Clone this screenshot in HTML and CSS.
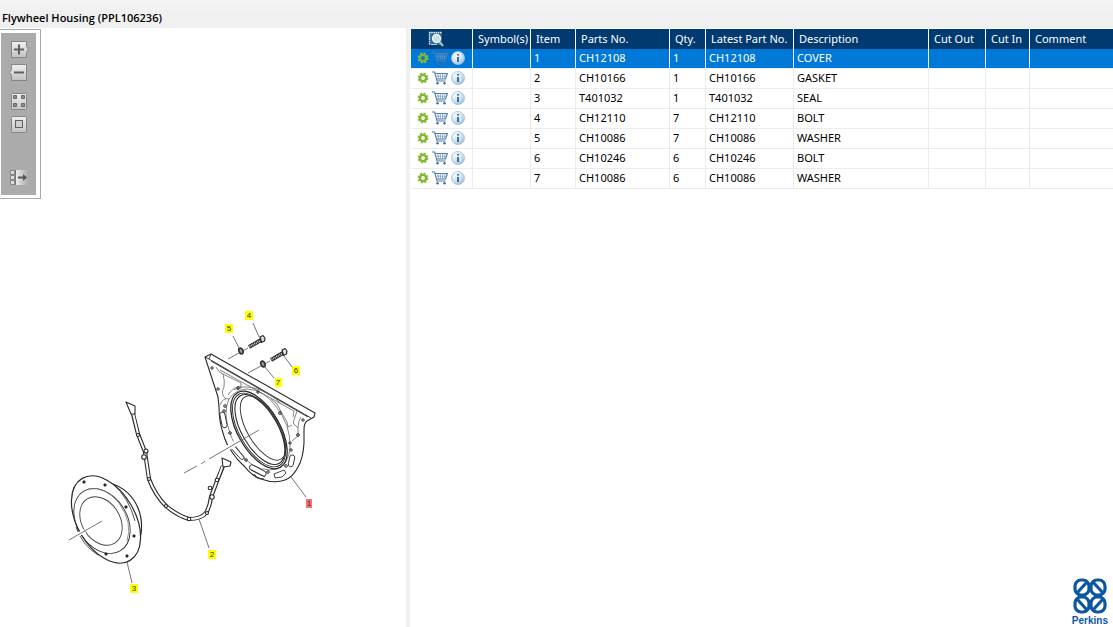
FILE: index.html
```html
<!DOCTYPE html>
<html lang="en">
<head>
<meta charset="utf-8">
<title>Flywheel Housing (PPL106236)</title>
<link rel="stylesheet" href="styles.css">
</head>
<body>
<svg class="defs" aria-hidden="true">
  <defs>
    <linearGradient id="key" x1="0" y1="0" x2="0" y2="1"><stop offset="0" stop-color="#f0f0f0"/><stop offset="1" stop-color="#c2c2c2"/></linearGradient>
    <linearGradient id="fade" x1="0" y1="0" x2="1" y2="0"><stop offset="0" stop-color="#ececec"/><stop offset="1" stop-color="#ababab"/></linearGradient>
    <radialGradient id="ball" cx=".35" cy=".3" r=".8"><stop offset="0" stop-color="#f4f9fc"/><stop offset=".6" stop-color="#cfe0ec"/><stop offset="1" stop-color="#8fb4d2"/></radialGradient>
    <symbol id="gear" viewBox="0 0 12 12">
      <circle cx="6" cy="6" r="4.500" fill="none" stroke="#8fc33f" stroke-width="2" stroke-dasharray="2 1.534"/>
      <circle cx="6" cy="6" r="3.100" fill="none" stroke="#7fb532" stroke-width="2.400"/>
    </symbol>
    <symbol id="cart" viewBox="0 0 16 14">
      <path d="M0 1h2.600l2.400 9h8.500M3 2.500h12.500l-2 5.500H5" fill="none" stroke="#4d7fab" stroke-width="1.100"/>
      <path d="M3.500 5.200h11M5.700 2.500l1 5.500M8.200 2.500l.3 5.500M10.700 2.500L10.400 8M13.200 2.500L12.200 8" stroke="#7797b5" stroke-width=".7"/>
      <circle cx="5.500" cy="12.300" r="1.200" fill="#3d6f9e"/><circle cx="12.500" cy="12.300" r="1.200" fill="#3d6f9e"/>
    </symbol>
    <symbol id="info" viewBox="0 0 14 14">
      <circle cx="7" cy="7" r="6.600" fill="url(#ball)" stroke="#a3c1d8" stroke-width=".7"/>
      <path d="M6 3h2v1.600H6zM6 6h2v5H6z" fill="#38709e"/>
    </symbol>
  </defs>
</svg>
<header class="titlebar"><h1 class="title">Flywheel Housing (PPL106236)</h1></header>
<main class="panes">
  <section class="drawing" aria-label="Drawing">
    <svg class="diagram" viewBox="0 28 406 599" preserveAspectRatio="xMinYMin meet" fill="none" stroke="#2a2a2a" stroke-width=".9" stroke-linejoin="round">
      <g id="housing">
        <path d="M205 357l6-3 104 59-1 4-7 4q-3 2-3 9v13q-1 16-6 24-5 10-13 13-10 4-24-1-8-2-16-12-8-7-13-15-6-8-9-19-4-12-4-26l-1-10z" fill="#fff" stroke-width="1.100"/>
        <path d="M205 357l4 2 102 59M209 359l2-5M211 361l97 56"/>
        <path d="M216 367q2 5 7 7 2 7 1 13-4 7 2 12M220 370l74 41-1 6M223 374l18 9v5l-4 2M228 395q5-8 13-9M297 411l-4 12 5 5v8l-6 5M301 417q-3 4-3 11M271 399l6 5q4 8 10 18l1 5 4-2M234 390q8-5 20-2 16 4 27 16M220 405q3-8 9-6" stroke="#666" stroke-width=".8"/>
        <path d="M229 430q-6-18 0-31 7-10 19-10 15 1 27 16 16 20 15 42-1 17-13 22-16 4-31-9-12-13-17-30" stroke="#555" stroke-width=".7"/>
        <g transform="rotate(-30 259 430)"><ellipse cx="259" cy="430" rx="21" ry="43" stroke-width="1.300"/><ellipse cx="259" cy="430" rx="19.500" ry="41"/><ellipse cx="260" cy="430" rx="18" ry="39" stroke-width="1.100"/></g>
        <ellipse cx="263" cy="428" rx="16" ry="36" transform="rotate(-30 263 428)" stroke="#333"/>
        <g stroke="#333" stroke-width=".9">
          <rect x="221" y="412" width="5" height="16" rx="2.500" transform="rotate(-12 223 420)"/>
          <rect x="229" y="451" width="17" height="4" rx="2" transform="rotate(48 238 453)"/>
          <rect x="249" y="468" width="18" height="5" rx="2.500" transform="rotate(28 258 470)"/>
          <path d="M274 474l10-4 2 3-4 4-7 1zM254 474l4 4 6 1M251 470l14 7"/>
          <rect x="289" y="455" width="5" height="12" rx="2.500" transform="rotate(12 292 461)"/>
        </g>
        <g stroke-width="1"><circle cx="212" cy="368" r="1.200"/><circle cx="218" cy="389" r="1.200"/><circle cx="225" cy="406" r="1.300"/><circle cx="224" cy="411" r="1.300"/><circle cx="230" cy="433" r="1.300"/><circle cx="246" cy="460" r="1.300"/><circle cx="268" cy="472" r="1.300"/><circle cx="286" cy="466" r="1.300"/><circle cx="290" cy="443" r="1.200"/><circle cx="291" cy="450" r="1.200"/><circle cx="298" cy="435" r="1.400"/><circle cx="303" cy="420" r="1.200"/><circle cx="280" cy="413" r="1.400"/><circle cx="258" cy="392" r="1.200"/><circle cx="238" cy="388" r="1.200"/></g>
      </g>
      <path d="M226 449l12-7" stroke="#fff" stroke-width="5"/>
      <path d="M184 473l13-7M201 464l4-3M209 459l50-29" stroke="#666"/>
      <g id="gasket">
        <path d="M133 414l5 20 7 18 4 27q6 16 17 27 12 10 23 13 12 0 17-6 4-7 5-16l6-16 6-15" stroke-width="4.200"/>
        <path d="M133 413l5 21 7 18 4 27q6 16 17 27 12 10 23 13 12 0 17-6 4-7 5-16l6-16 6-16" stroke="#fff" stroke-width="2"/>
        <path d="M126 402l9 4v8h-4zM222 458l9 4-1 4-7 1z" fill="#fff" stroke-width="1.100"/>
        <g fill="#fff" stroke-width="1.100"><circle cx="138" cy="435" r="1.500"/><circle cx="146" cy="451" r="2"/><circle cx="144" cy="457" r="2.300"/><circle cx="149" cy="479" r="1.500"/><circle cx="166" cy="506" r="1.500"/><circle cx="189" cy="519" r="1.800"/><circle cx="207" cy="513" r="1.500"/><circle cx="210" cy="488" r="1.800"/><circle cx="212" cy="497" r="2.200"/><circle cx="217" cy="480" r="1.800"/></g>
      </g>
      <g id="cover">
        <path d="M110 483q20 6 28 25 5 12 3 26l-2 5" stroke-width="1.200"/>
        <ellipse cx="106" cy="519.500" rx="29" ry="47.500" transform="rotate(-30 106 519.500)" fill="#fff" stroke-width="1.200"/>
        <path d="M76 527q6 18 22 28M113 484q16 14 22 37" stroke-width=".8"/>
        <ellipse cx="102" cy="521" rx="25" ry="35" transform="rotate(-32 102 521)" stroke="#333"/>
        <path d="M88 489q17-3 31 14 14 20 8 38" stroke="#777" stroke-width=".8"/>
        <ellipse cx="101" cy="521" rx="19" ry="26" transform="rotate(-32 101 521)" stroke="#444"/>
        <g fill="#222"><circle cx="84" cy="482" r="1.200"/><circle cx="105" cy="485" r="1.200"/><circle cx="126" cy="507" r="1.200"/><circle cx="134" cy="536" r="1.200"/><circle cx="127" cy="556" r="1.200"/><circle cx="106" cy="554" r="1.200"/></g>
        <path d="M75 536l10-5" stroke="#fff" stroke-width="4"/><path d="M69 540l33-19" stroke="#666"/>
      </g>
      <g id="bolts">
        <path d="M228 359l20-11M248 373l22-12" stroke="#666"/>
        <g id="bolt"><path d="M249 347l12-7" stroke-width="4"/><path d="M249.500 346.500l11-6" stroke="#ccc" stroke-width="2" stroke-dasharray="1 .8"/><path d="M260 337l3-1.500 2 2.500-.5 3-3 1.500z" fill="#ddd" stroke-width="1.200"/></g>
        <use href="#bolt" x="22" y="13"/>
        <ellipse cx="241" cy="351" rx="2" ry="3" transform="rotate(-25 241 351)" fill="#999" stroke-width="1.500"/>
        <ellipse cx="263" cy="364" rx="2" ry="3" transform="rotate(-25 263 364)" fill="#999" stroke-width="1.500"/>
      </g>
      <path d="M253 323l6 14M233 336l6 12M284 356l8 11M265 367l9 11M291 477l15 20M199 519l10 29M127 562l5 21" stroke="#666"/>
      <g class="tags">
        <path d="M245 311h8v9h-8zM225 324h8v9h-8zM292 366h8v9h-8zM275 378h7v9h-7zM208 550h8v9h-8zM130 584h8v9h-8z" fill="#ff0"/>
        <path d="M306 499h6v9h-6z" fill="#f47474"/>
        <text x="249" y="318">4</text><text x="229" y="331">5</text><text x="296" y="373">6</text><text x="278" y="385">7</text><text x="309" y="506">1</text><text x="212" y="557">2</text><text x="134" y="591">3</text>
      </g>
    </svg>
    <div class="toolbar" role="toolbar" aria-label="View">
      <button class="tool" aria-label="Zoom in"><svg viewBox="0 0 20 17"><path d="M2.500.5h15v5l2 3-2 3v5h-15z" fill="url(#key)" stroke="#858585"/><path d="M5 8.500h10M10 3.500v10" stroke="#606060" stroke-width="2"/></svg></button>
      <button class="tool" aria-label="Zoom out"><svg viewBox="0 0 20 17"><path d="M2.500.5h15v16h-15v-5l-2-3 2-3z" fill="url(#key)" stroke="#858585"/><path d="M5 8.500h10" stroke="#606060" stroke-width="2"/></svg></button>
      <button class="tool tool-group" aria-label="Fit to window"><svg viewBox="0 0 20 17"><rect x="2.500" y=".5" width="15" height="16" rx="1" fill="url(#key)" stroke="#858585"/><path d="M4.500 2.500h3v3h-3zM12.500 2.500h3v3h-3zM4.500 10.500h3v3h-3zM12.500 10.500h3v3h-3z" fill="#8c8c8c" stroke="#686868"/></svg></button>
      <button class="tool" aria-label="Actual size"><svg viewBox="0 0 20 17"><rect x="2.500" y=".5" width="15" height="16" rx="1" fill="url(#key)" stroke="#858585"/><rect x="6.500" y="4.500" width="7" height="7" fill="#d0d0d0" stroke="#606060"/></svg></button>
      <button class="tool tool-last" aria-label="Toggle list"><svg viewBox="0 0 20 17"><path d="M1.500 1.500h4v4h-4zM1.500 6.500h4v4h-4zM1.500 11.500h4v4h-4z" fill="#ddd" stroke="#858585"/><path d="M7 1h12v15H7z" fill="url(#fade)"/><path d="M6.500 1v15" stroke="#777"/><path d="M9 8.500h6" stroke="#555" stroke-width="2"/><path d="M14 5l4 3.500-4 3.500z" fill="#555"/></svg></button>
    </div>
  </section>
  <div class="splitter"></div>
  <section class="list" aria-label="Parts list">
    <table class="parts">
      <colgroup><col class="c-act"><col class="c-sym"><col class="c-item"><col class="c-part"><col class="c-qty"><col class="c-latest"><col class="c-desc"><col class="c-out"><col class="c-in"><col></colgroup>
      <thead><tr><th class="find"><svg class="find-icon" viewBox="0 0 17 16" role="img" aria-label="Preview"><path d="M1 1h13v13H1z" fill="#2f6b95"/><path d="M1 1.500h13M1.500 1v13" stroke="#e4eef4" stroke-width="1.300" stroke-dasharray="1.500 .7"/><path d="M3 13.500h6" stroke="#a8c8dc"/><circle cx="8.500" cy="7.500" r="4" fill="#c7dfeb" stroke="#f3f8fb" stroke-width="1.300"/><path d="M11.500 11l3.500 4" stroke="#a9bfd0" stroke-width="2"/></svg></th><th>Symbol(s)</th><th>Item</th><th>Parts No.</th><th>Qty.</th><th>Latest Part No.</th><th>Description</th><th>Cut Out</th><th>Cut In</th><th>Comment</th></tr></thead>
      <tbody>
        <tr class="selected"><td><div class="actions"><button aria-label="Options"><svg class="gear"><use href="#gear"/></svg></button><button aria-label="Add to cart"><svg class="cart"><use href="#cart"/></svg></button><button aria-label="Information"><svg class="info"><use href="#info"/></svg></button></div></td><td></td><td>1</td><td>CH12108</td><td>1</td><td>CH12108</td><td>COVER</td><td></td><td></td><td></td></tr>
        <tr><td><div class="actions"><button aria-label="Options"><svg class="gear"><use href="#gear"/></svg></button><button aria-label="Add to cart"><svg class="cart"><use href="#cart"/></svg></button><button aria-label="Information"><svg class="info"><use href="#info"/></svg></button></div></td><td></td><td>2</td><td>CH10166</td><td>1</td><td>CH10166</td><td>GASKET</td><td></td><td></td><td></td></tr>
        <tr><td><div class="actions"><button aria-label="Options"><svg class="gear"><use href="#gear"/></svg></button><button aria-label="Add to cart"><svg class="cart"><use href="#cart"/></svg></button><button aria-label="Information"><svg class="info"><use href="#info"/></svg></button></div></td><td></td><td>3</td><td>T401032</td><td>1</td><td>T401032</td><td>SEAL</td><td></td><td></td><td></td></tr>
        <tr><td><div class="actions"><button aria-label="Options"><svg class="gear"><use href="#gear"/></svg></button><button aria-label="Add to cart"><svg class="cart"><use href="#cart"/></svg></button><button aria-label="Information"><svg class="info"><use href="#info"/></svg></button></div></td><td></td><td>4</td><td>CH12110</td><td>7</td><td>CH12110</td><td>BOLT</td><td></td><td></td><td></td></tr>
        <tr><td><div class="actions"><button aria-label="Options"><svg class="gear"><use href="#gear"/></svg></button><button aria-label="Add to cart"><svg class="cart"><use href="#cart"/></svg></button><button aria-label="Information"><svg class="info"><use href="#info"/></svg></button></div></td><td></td><td>5</td><td>CH10086</td><td>7</td><td>CH10086</td><td>WASHER</td><td></td><td></td><td></td></tr>
        <tr><td><div class="actions"><button aria-label="Options"><svg class="gear"><use href="#gear"/></svg></button><button aria-label="Add to cart"><svg class="cart"><use href="#cart"/></svg></button><button aria-label="Information"><svg class="info"><use href="#info"/></svg></button></div></td><td></td><td>6</td><td>CH10246</td><td>6</td><td>CH10246</td><td>BOLT</td><td></td><td></td><td></td></tr>
        <tr><td><div class="actions"><button aria-label="Options"><svg class="gear"><use href="#gear"/></svg></button><button aria-label="Add to cart"><svg class="cart"><use href="#cart"/></svg></button><button aria-label="Information"><svg class="info"><use href="#info"/></svg></button></div></td><td></td><td>7</td><td>CH10086</td><td>6</td><td>CH10086</td><td>WASHER</td><td></td><td></td><td></td></tr>
      </tbody>
    </table>
    <div class="brand">
      <svg class="brand-mark" viewBox="0 0 34 36" fill="none" stroke="#0c57a0" stroke-width="3.200"><rect x="2" y="2" width="14" height="15" rx="6"/><rect x="18" y="2" width="14" height="15" rx="6"/><rect x="2" y="19" width="14" height="15" rx="6"/><rect x="18" y="19" width="14" height="15" rx="6"/><path d="M4 15L14 4M20 4l10 11M4 21l10 11M20 32l10-11"/></svg>
      <span class="brand-name">Perkins</span>
    </div>
  </section>
</main>
</body>
</html>
```
FILE: styles.css
```css
* { box-sizing: border-box; }
body {
  margin: 0;
  min-height: 100vh;
  display: flex;
  flex-direction: column;
  background: #fff;
  color: #000;
  font: 11px/18px "Noto Sans", "Open Sans", sans-serif;
}
button { padding: 0; border: 0; background: none; display: flex; }
.defs { position: absolute; width: 0; height: 0; }
.titlebar {
  height: 28px;
  padding: 9px 2px 0;
  background: linear-gradient(#f5f5f5, #f0f0f0 12px);
}
.title { margin: 0; font: 600 11px/18px "Open Sans", sans-serif; }
.panes {
  flex: 1;
  display: grid;
  grid-template-columns: minmax(0, 406fr) 4px minmax(0, 703fr);
}
.drawing { position: relative; }
.diagram { display: block; width: 100%; }
.tags { stroke: none; }
.tags text {
  fill: #333;
  font: 8px "Liberation Sans", sans-serif;
  text-anchor: middle;
}
.toolbar {
  position: absolute;
  left: 0;
  top: 1px;
  display: flex;
  flex-direction: column;
  gap: 6px;
  width: 41px;
  padding: 11px 11px 12px 9px;
  border: 1px solid #a9a9a9;
  border-left: 0;
  background: #ababab;
  box-shadow: inset -4px 0 #fff, inset 1px 0 #fff, inset 0 3px #fff, inset 0 -3px #fff;
}
.tool svg { display: block; width: 20px; height: 17px; }
.tool-group { margin-top: 6px; }
.tool-last { margin-top: 30px; }
.splitter { background: #f0f0f0; }
.list {
  display: flex;
  flex-direction: column;
  padding: 1px 0 0 1px;
}
.parts {
  width: 100%;
  table-layout: fixed;
  border-spacing: 0;
}
.c-act { width: 62px; }
.c-sym { width: 58px; }
.c-item { width: 45px; }
.c-part { width: 94px; }
.c-qty { width: 36px; }
.c-latest { width: 88px; }
.c-desc { width: 135px; }
.c-out { width: 57px; }
.c-in { width: 44px; }
th, td {
  padding: 0 3px;
  border-right: 1px solid #ececec;
  text-align: left;
  font-weight: normal;
  white-space: nowrap;
}
th:last-child, td:last-child { border-right: 0; }
th {
  height: 20px;
  padding: 0 0 0 5px;
  border-color: #fff;
  background: #003a70;
  color: #fff;
}
td {
  height: 20px;
  padding-bottom: 1px;
  border-bottom: 1px solid #ececec;
}
.selected td { background: #0078d7; color: #fff; }
.find { padding-left: 17px; }
.find-icon { display: block; width: 17px; height: 16px; }
.actions { display: flex; align-items: center; gap: 3px; padding-left: 3px; }
.actions svg { display: block; }
.gear { width: 12px; height: 12px; }
.cart { width: 16px; height: 14px; }
.info { width: 14px; height: 14px; }
.brand {
  margin-top: auto;
  align-self: flex-end;
  display: flex;
  flex-direction: column;
  align-items: center;
  padding-right: 5px;
}
.brand-mark { width: 34px; height: 36px; }
.brand-name { color: #0c57a0; font: bold 10px/13px "Liberation Sans", sans-serif; }
```
